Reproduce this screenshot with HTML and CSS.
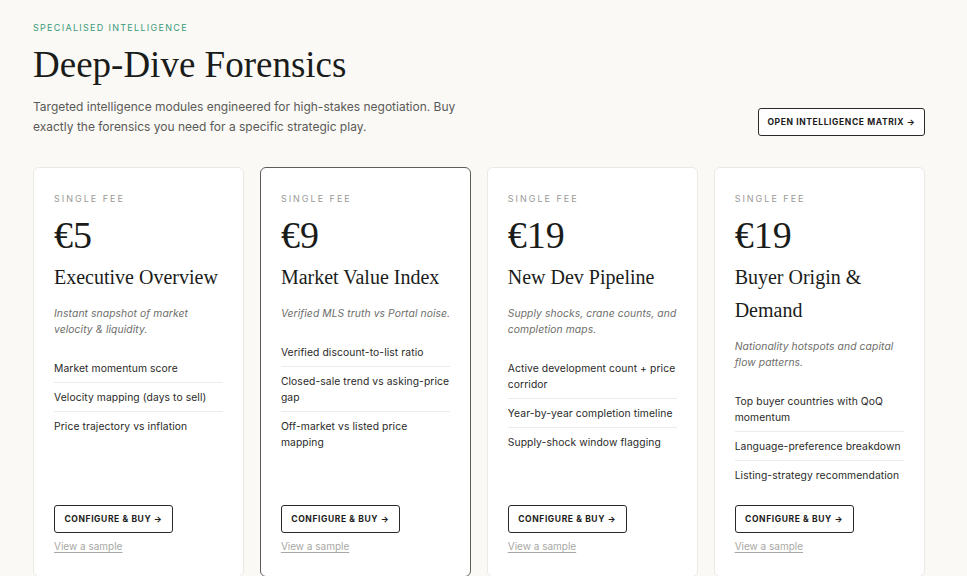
FILE: index.html
```html
<!DOCTYPE html>
<html lang="en">
<head>
<meta charset="utf-8">
<title>Deep-Dive Forensics</title>
<link rel="stylesheet" href="styles.css">
</head>
<body>
<main class="page">
  <header class="head">
    <div class="head-text">
      <div class="eyebrow">Specialised Intelligence</div>
      <h1 class="title">Deep-Dive Forensics</h1>
      <p class="lede">Targeted intelligence modules engineered for high-stakes negotiation. Buy exactly the forensics you need for a specific strategic play.</p>
    </div>
    <a class="btn btn-matrix" href="#">Open Intelligence Matrix →</a>
  </header>

  <section class="cards">
    <article class="card">
      <div class="fee">Single Fee</div>
      <div class="price">€5</div>
      <h2 class="card-title">Executive Overview</h2>
      <p class="desc">Instant snapshot of market velocity &amp; liquidity.</p>
      <ul class="feats">
        <li>Market momentum score</li>
        <li>Velocity mapping (days to sell)</li>
        <li>Price trajectory vs inflation</li>
      </ul>
      <a class="btn btn-buy" href="#">Configure &amp; Buy →</a>
      <a class="sample" href="#">View a sample</a>
    </article>

    <article class="card card-active">
      <div class="fee">Single Fee</div>
      <div class="price">€9</div>
      <h2 class="card-title">Market Value Index</h2>
      <p class="desc">Verified MLS truth vs Portal noise.</p>
      <ul class="feats">
        <li>Verified discount-to-list ratio</li>
        <li>Closed-sale trend vs asking-price gap</li>
        <li>Off-market vs listed price mapping</li>
      </ul>
      <a class="btn btn-buy" href="#">Configure &amp; Buy →</a>
      <a class="sample" href="#">View a sample</a>
    </article>

    <article class="card">
      <div class="fee">Single Fee</div>
      <div class="price">€19</div>
      <h2 class="card-title">New Dev Pipeline</h2>
      <p class="desc">Supply shocks, crane counts, and completion maps.</p>
      <ul class="feats">
        <li>Active development count + price corridor</li>
        <li>Year-by-year completion timeline</li>
        <li>Supply-shock window flagging</li>
      </ul>
      <a class="btn btn-buy" href="#">Configure &amp; Buy →</a>
      <a class="sample" href="#">View a sample</a>
    </article>

    <article class="card">
      <div class="fee">Single Fee</div>
      <div class="price">€19</div>
      <h2 class="card-title">Buyer Origin &amp; Demand</h2>
      <p class="desc">Nationality hotspots and capital flow patterns.</p>
      <ul class="feats">
        <li>Top buyer countries with QoQ momentum</li>
        <li>Language-preference breakdown</li>
        <li>Listing-strategy recommendation</li>
      </ul>
      <a class="btn btn-buy" href="#">Configure &amp; Buy →</a>
      <a class="sample" href="#">View a sample</a>
    </article>
  </section>
</main>
</body>
</html>
```

FILE: styles.css
```css
* { box-sizing: border-box; }

html, body {
  margin: 0;
  padding: 0;
  background: #faf9f6;
  color: #1c1c1a;
  font-family: Inter, "Noto Sans", "Liberation Sans", sans-serif;
}

.page {
  padding: 21px 42px 0 33px;
}

.head {
  display: flex;
  justify-content: space-between;
  align-items: flex-end;
}

.eyebrow {
  font-size: 9px;
  line-height: 14px;
  letter-spacing: 1.3px;
  text-transform: uppercase;
  color: #3b9b7b;
}

.title {
  margin: 7px 0 0;
  font-family: "Liberation Serif", "DejaVu Serif", serif;
  font-weight: 400;
  font-size: 37px;
  line-height: 46px;
  color: #1a1c1a;
}

.lede {
  margin: 9px 0 0;
  max-width: 430px;
  font-size: 12px;
  line-height: 20px;
  color: #5a5a57;
}

.btn {
  display: inline-flex;
  align-items: center;
  justify-content: center;
  border: 1px solid #2a2a28;
  border-radius: 3px;
  background: #fff;
  color: #1c1c1a;
  text-decoration: none;
  text-transform: uppercase;
  font-weight: 700;
  font-size: 8.5px;
  letter-spacing: 0.6px;
}

.btn-matrix {
  width: 167px;
  height: 28px;
  margin-bottom: 1px;
}

.cards {
  margin-top: 30px;
  display: grid;
  grid-template-columns: repeat(4, 1fr);
  gap: 15.5px;
}

.card {
  display: flex;
  flex-direction: column;
  align-items: flex-start;
  min-height: 410px;
  padding: 24px 20px 23px;
  background: #fff;
  border: 1px solid #ece9e3;
  border-radius: 6px;
}

.card-active {
  border-color: #5c5c58;
}

.fee {
  font-size: 9px;
  line-height: 14px;
  letter-spacing: 2px;
  text-transform: uppercase;
  color: #9a9a96;
}

.price {
  margin-top: 7px;
  font-family: "Liberation Serif", "DejaVu Serif", serif;
  font-size: 38px;
  line-height: 44px;
  color: #1a1c1a;
}

.card-title {
  margin: 4px 0 0;
  font-family: "Liberation Serif", "DejaVu Serif", serif;
  font-weight: 400;
  font-size: 20px;
  line-height: 33px;
  color: #1a1c1a;
}

.desc {
  margin: 11px 0 0;
  font-size: 10.3px;
  line-height: 16px;
  letter-spacing: 0.1px;
  font-style: italic;
  color: #6e6e6a;
}

.feats {
  list-style: none;
  margin: 17px 0 0;
  padding: 0;
  width: 100%;
}

.feats li {
  padding: 6px 0;
  font-size: 10.3px;
  line-height: 16px;
  letter-spacing: 0.1px;
  color: #2a2a28;
  border-bottom: 1px solid #ecebe7;
}

.feats li:last-child {
  border-bottom: none;
}

.btn-buy {
  margin-top: auto;
  width: 119px;
  height: 28px;
}

.sample {
  margin-top: 6px;
  font-size: 10px;
  line-height: 14px;
  color: #a8a8a4;
  text-decoration: underline;
  text-underline-offset: 2px;
}
```
